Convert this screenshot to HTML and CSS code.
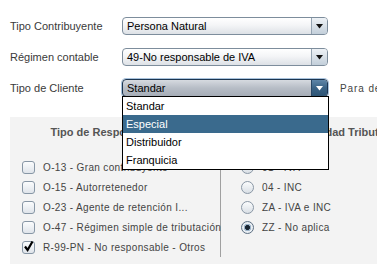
FILE: index.html
```html
<!DOCTYPE html>
<html lang="es">
<head>
<meta charset="utf-8">
<link rel="stylesheet" href="styles.css">
</head>
<body>
<div class="form">
  <div class="row">
    <label class="lbl">Tipo Contribuyente</label>
    <div class="combo"><span class="val">Persona Natural</span><span class="btn"><svg width="7" height="5" viewBox="0 0 7 5"><path d="M0 0H7L3.5 4.5Z" fill="#111"/></svg></span></div>
  </div>
  <div class="row">
    <label class="lbl">Régimen contable</label>
    <div class="combo"><span class="val">49-No responsable de IVA</span><span class="btn"><svg width="7" height="5" viewBox="0 0 7 5"><path d="M0 0H7L3.5 4.5Z" fill="#111"/></svg></span></div>
  </div>
  <div class="row">
    <label class="lbl">Tipo de Cliente</label>
    <div class="combo open"><span class="val">Standar</span><span class="btn"><svg width="7" height="5" viewBox="0 0 7 5"><path d="M0 0H7L3.5 4.5Z" fill="#fff"/></svg></span>
      <ul class="list">
        <li>Standar</li>
        <li class="sel">Especial</li>
        <li>Distribuidor</li>
        <li>Franquicia</li>
      </ul>
    </div>
    <span class="hint">Para descuentos</span>
  </div>
</div>
<div class="panel">
  <div class="col left">
    <h3 class="head">Tipo de Responsabilidad</h3>
    <ul class="opts">
      <li><span class="chk"></span>O-13 - Gran contribuyente</li>
      <li><span class="chk"></span>O-15 - Autorretenedor</li>
      <li><span class="chk"></span>O-23 - Agente de retención I...</li>
      <li><span class="chk"></span>O-47 - Régimen simple de tributación</li>
      <li><span class="chk on"><svg width="13" height="13" viewBox="0 0 13 13"><path d="M3 6.5L5.6 10L10.5 1.5" fill="none" stroke="#000" stroke-width="2.2"/></svg></span>R-99-PN - No responsable - Otros</li>
    </ul>
  </div>
  <div class="col right">
    <h3 class="head rhead">Responsabilidad Tributaria</h3>
    <ul class="opts">
      <li><span class="rad"></span>01 - IVA</li>
      <li><span class="rad"></span>04 - INC</li>
      <li><span class="rad"></span>ZA - IVA e INC</li>
      <li><span class="rad on"></span>ZZ - No aplica</li>
    </ul>
  </div>
</div>
</body>
</html>
```

FILE: styles.css
```css
html, body {
  margin: 0;
  padding: 0;
  background: #fff;
  overflow: hidden;
  height: 264px;
}
body {
  font-family: "Liberation Sans", Arial, sans-serif;
  font-size: 11px;
  color: #333;
}
.form {
  padding: 17px 0 0 10px;
  display: flex;
  flex-direction: column;
  gap: 13px;
}
.row {
  display: flex;
  align-items: center;
  height: 18px;
}
.lbl {
  flex: none;
  width: 112px;
  font-size: 11px;
  color: #3a3a3a;
}
.combo {
  flex: none;
  position: relative;
  width: 206px;
  height: 18px;
  box-sizing: border-box;
  border: 1px solid #7d8d9c;
  border-radius: 4px;
  background: linear-gradient(#ffffff, #f4f5f7 45%, #dde1e6);
  display: flex;
}
.val {
  flex: 1;
  padding-left: 4px;
  font-size: 11px;
  line-height: 16px;
  color: #000;
}
.btn {
  width: 15px;
  border-left: 1px solid #95a4b2;
  border-radius: 0 3px 3px 0;
  background: linear-gradient(#eef2f6, #c3cfda);
  display: flex;
  align-items: center;
  justify-content: center;
}
.combo.open {
  border-color: #1c3550;
  background: linear-gradient(#d6dae0, #b7bdc6 50%, #a6adb7);
  box-shadow: 0 0 0 1px #a9c3dd;
}
.combo.open .btn {
  border-left-color: #2a4866;
  background: linear-gradient(#5f86a8, #3a6386 50%, #2e5575);
}
.list {
  position: absolute;
  left: -1px;
  top: 16px;
  width: 207px;
  box-sizing: border-box;
  margin: 0;
  padding: 0;
  list-style: none;
  background: #fff;
  border: 1px solid #000;
  z-index: 5;
}
.list li {
  height: 18px;
  line-height: 18px;
  padding-left: 3px;
  font-size: 11px;
  color: #000;
}
.list li.sel {
  background: #3a6a8d;
  color: #fff;
}
.hint {
  flex: 1;
  min-width: 0;
  overflow: hidden;
  margin-left: 12px;
  font-size: 10px;
  letter-spacing: 0.9px;
  color: #444;
  white-space: nowrap;
}
.panel {
  margin: 20px 0 0 10px;
  height: 148px;
  background: #f3f3f3;
  display: grid;
  grid-template-columns: 211px 1fr;
  padding-top: 8px;
  box-sizing: border-box;
  overflow: hidden;
}
.col {
  min-width: 0;
}
.head {
  margin: 0;
  font-size: 11px;
  line-height: 14px;
  font-weight: bold;
  color: #555;
  text-align: center;
  white-space: nowrap;
}
.rhead {
  text-align: left;
  padding-left: 36px;
  overflow: hidden;
}
.opts {
  list-style: none;
  margin: 18px 0 0;
  padding: 0 0 0 12px;
}
.left .opts {
  border-right: 1px solid #a0a0a0;
  height: 100px;
}
.right .opts {
  padding-left: 20px;
}
.opts li {
  height: 20px;
  display: flex;
  align-items: center;
  gap: 8px;
  font-size: 10px;
  letter-spacing: 0.35px;
  color: #444;
  white-space: nowrap;
}
.chk {
  width: 13px;
  height: 13px;
  box-sizing: border-box;
  border: 1px solid #8796a5;
  border-radius: 3px;
  background: linear-gradient(#fbfcfd, #dfe4ea);
  flex: none;
  position: relative;
}
.chk svg {
  position: absolute;
  left: -1px;
  top: -2px;
}
.rad {
  width: 13px;
  height: 13px;
  box-sizing: border-box;
  border: 1px solid #8a97a5;
  border-radius: 50%;
  background: linear-gradient(#fbfcfd, #d9dfe5);
  flex: none;
}
.rad.on {
  border-color: #5d6f82;
  background: radial-gradient(circle, #1a2633 0 2.2px, #9db4c9 2.6px 3.5px, #e9eef3 4px);
}
```
